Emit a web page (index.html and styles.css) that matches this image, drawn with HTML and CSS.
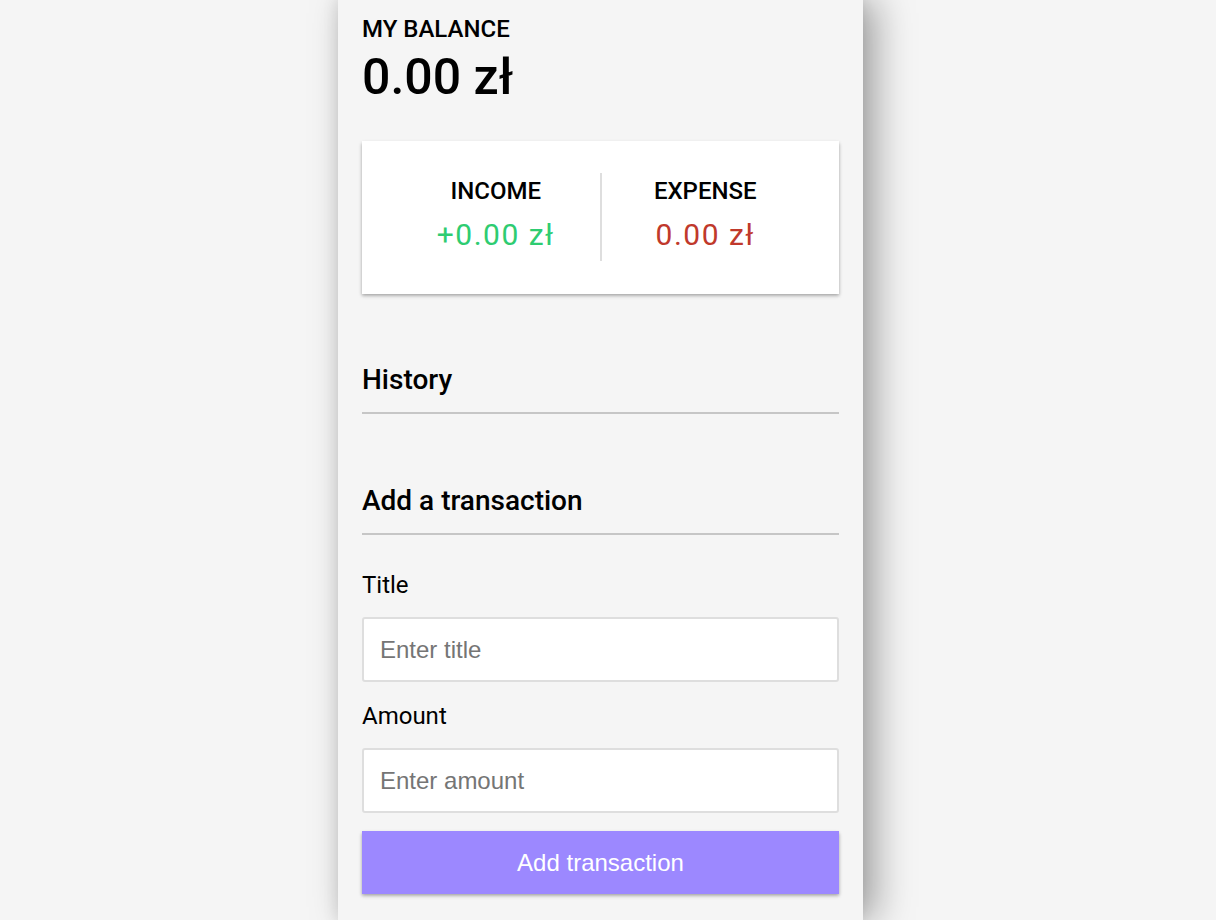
FILE: index.html
```html
<!DOCTYPE html>
<html lang="en">
<head>
<meta charset="utf-8">
<title>Expense Tracker</title>
<link rel="stylesheet" href="styles.css">
</head>
<body>
  <main class="app">
    <h4 class="balance-label">My Balance</h4>
    <h1 class="balance">0.00 zł</h1>

    <section class="inc-exp">
      <div class="inc-exp-col col-income">
        <h4 class="inc-exp-title">Income</h4>
        <p class="money plus">+0.00 zł</p>
      </div>
      <div class="inc-exp-col">
        <h4 class="inc-exp-title">Expense</h4>
        <p class="money minus">0.00 zł</p>
      </div>
    </section>

    <h3 class="section-title history-title">History</h3>
    <ul class="list"></ul>

    <h3 class="section-title add-title">Add a transaction</h3>
    <form class="form">
      <label class="field-label label-title" for="text">Title</label>
      <input class="field-input" type="text" id="text" placeholder="Enter title">
      <label class="field-label label-amount" for="amount">Amount</label>
      <input class="field-input" type="number" id="amount" placeholder="Enter amount">
      <button class="btn" type="button">Add transaction</button>
    </form>
  </main>
</body>
</html>
```

FILE: styles.css
```css
* {
  box-sizing: border-box;
}

html, body {
  margin: 0;
  height: 100%;
}

body {
  background-color: #f5f5f5;
  font-family: Roboto, "Noto Sans", sans-serif;
  color: #000;
  display: flex;
  justify-content: center;
  padding-right: 15px;
  overflow: hidden;
}

.app {
  width: 525px;
  min-height: 100%;
  background-color: #f5f5f5;
  padding: 15px 24px 0 24px;
  box-shadow: 12px 0 36px rgba(0, 0, 0, 0.36), -2px 0 14px rgba(0, 0, 0, 0.08);
  display: flex;
  flex-direction: column;
}

.balance-label {
  margin: 0;
  font-size: 24px;
  line-height: 28px;
  font-weight: 500;
  text-transform: uppercase;
}

.balance {
  margin: 6px 0 0 0;
  font-size: 50px;
  line-height: 57px;
  font-weight: 500;
  letter-spacing: 0;
}

.inc-exp {
  margin-top: 35px;
  height: 153px;
  background-color: #fff;
  box-shadow: 0 1.5px 4.5px rgba(0, 0, 0, 0.12), 0 1.5px 3px rgba(0, 0, 0, 0.24);
  padding: 32px 30px 33px 30px;
  display: flex;
}

.inc-exp-col {
  flex: 1;
  text-align: center;
  padding: 4px 0 8px 0;
}

.col-income {
  border-right: 2px solid #dedede;
}

.inc-exp-title {
  margin: 0;
  font-size: 24px;
  line-height: 28px;
  font-weight: 500;
  text-transform: uppercase;
}

.money {
  margin: 12px 0 0 0;
  font-size: 30px;
  line-height: 36px;
  letter-spacing: 1.5px;
}

.money.plus {
  color: #2ecc71;
}

.money.minus {
  color: #c0392b;
}

.section-title {
  margin: 0;
  font-size: 28px;
  line-height: 33px;
  font-weight: 500;
  padding-bottom: 16px;
  border-bottom: 2px solid #c6c6c6;
}

.history-title {
  margin-top: 69px;
}

.list {
  margin: 0;
  padding: 0;
  list-style: none;
}

.add-title {
  margin-top: 70px;
}

.form {
  display: flex;
  flex-direction: column;
}

.field-label {
  font-size: 24px;
  line-height: 28px;
}

.label-title {
  margin-top: 36px;
}

.label-amount {
  margin-top: 20px;
}

.field-input {
  margin-top: 18px;
  height: 65px;
  width: 100%;
  border: 2px solid #dedede;
  border-radius: 3px;
  background: #fff;
  padding: 0 16px;
  font-family: "Liberation Sans", Arial, sans-serif;
  font-size: 24px;
  color: #000;
  outline: none;
}

.field-input::placeholder {
  color: #757575;
}

.btn {
  margin-top: 18px;
  height: 63px;
  width: 100%;
  border: 0;
  background-color: #9c88ff;
  box-shadow: 0 1.5px 4.5px rgba(0, 0, 0, 0.12), 0 1.5px 3px rgba(0, 0, 0, 0.24);
  color: #fff;
  font-family: "Liberation Sans", Arial, sans-serif;
  font-size: 24px;
  cursor: pointer;
}
```
